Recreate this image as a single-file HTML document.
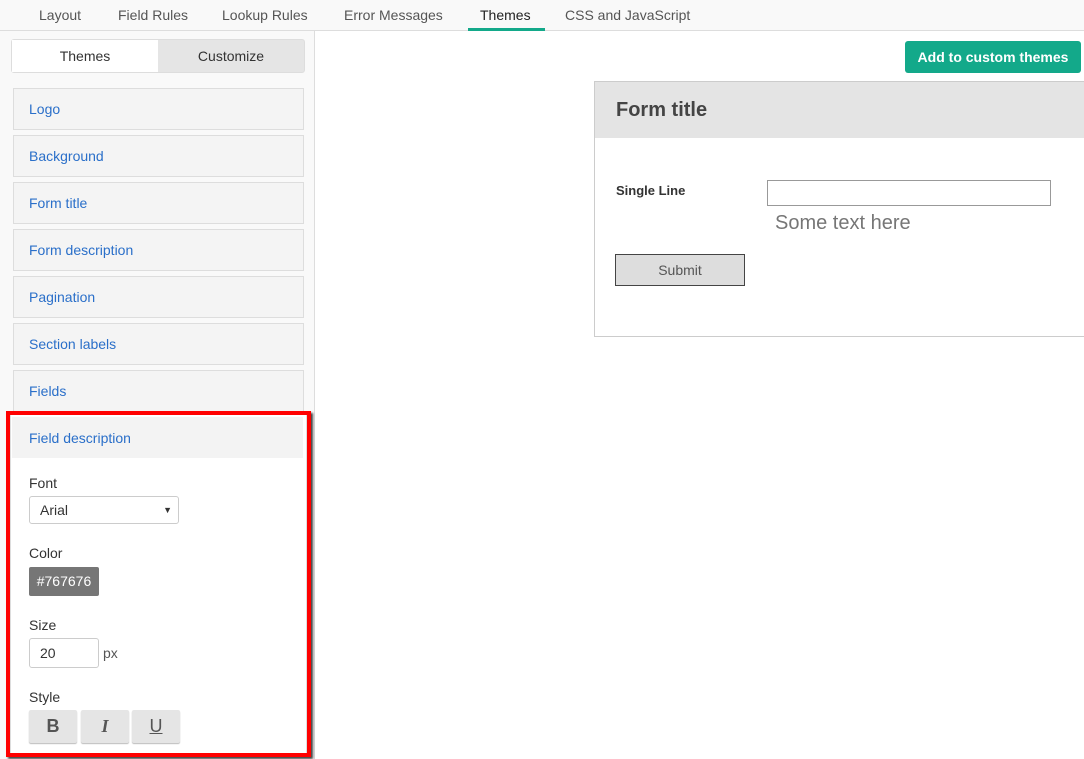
<!DOCTYPE html>
<html><head><style>
*{box-sizing:border-box;margin:0;padding:0}
body{width:1084px;height:759px;overflow:hidden;background:#fff;font-family:"Liberation Sans",sans-serif;position:relative}
.a{position:absolute}
.tab{position:absolute;top:0;height:30px;line-height:30px;font-size:14px;color:#555}
.item{position:absolute;left:13px;width:291px;height:42px;background:#f4f4f4;border:1px solid #ddd;color:#2a6fc9;font-size:14px;line-height:40px;padding-left:15px}
.lbl{position:absolute;left:29px;font-size:14px;color:#333}
.sb{position:absolute;top:710px;width:48px;height:33px;background:#e5e5e5;border-radius:2px;box-shadow:0 1px 1px #bbb;text-align:center;line-height:33px;font-size:18px;font-weight:bold;color:#555}
</style></head><body>
<div class="a" style="left:0;top:0;width:1084px;height:31px;background:#f9f9f9;border-bottom:1px solid #ddd"></div>
<div class="tab" style="left:39px">Layout</div>
<div class="tab" style="left:118px">Field Rules</div>
<div class="tab" style="left:222px">Lookup Rules</div>
<div class="tab" style="left:344px">Error Messages</div>
<div class="tab" style="left:480px;color:#222">Themes</div>
<div class="a" style="left:468px;top:28px;width:77px;height:3px;background:#13a98a"></div>
<div class="tab" style="left:565px">CSS and JavaScript</div>
<div class="a" style="left:0;top:31px;width:315px;height:728px;background:#f9f9f9;border-right:1px solid #ddd"></div>
<div class="a" style="left:11px;top:39px;width:294px;height:34px;border:1px solid #ddd;border-radius:3px;background:#e5e5e5"></div>
<div class="a" style="left:12px;top:40px;width:146px;height:32px;background:#fff;text-align:center;line-height:32px;font-size:14px;color:#333">Themes</div>
<div class="a" style="left:158px;top:40px;width:146px;height:32px;text-align:center;line-height:32px;font-size:14px;color:#333">Customize</div>
<div class="item" style="top:88px">Logo</div>
<div class="item" style="top:135px">Background</div>
<div class="item" style="top:182px">Form title</div>
<div class="item" style="top:229px">Form description</div>
<div class="item" style="top:276px">Pagination</div>
<div class="item" style="top:323px">Section labels</div>
<div class="item" style="top:370px">Fields</div>
<div class="a" style="left:6px;top:411px;width:305px;height:346px;border:4px solid #f00;background:#fff;box-shadow:2px 2px 2px #444"></div>
<div class="a" style="left:10px;top:415px;width:297px;height:338px;border-left:1px solid #ddd;border-right:1px solid #ddd"></div>
<div class="a" style="left:12px;top:417px;width:291px;height:41px;background:#f3f3f3;color:#2a6fc9;font-size:14px;line-height:42px;padding-left:17px">Field description</div>
<div class="lbl" style="top:475px">Font</div>
<div class="a" style="left:29px;top:496px;width:150px;height:28px;border:1px solid #ccc;border-radius:3px;background:#fff;font-size:14px;line-height:26px;padding-left:10px;color:#333">Arial<span style="position:absolute;right:6px;font-size:9px">▼</span></div>
<div class="lbl" style="top:545px">Color</div>
<div class="a" style="left:29px;top:567px;width:70px;height:29px;background:#767676;border-radius:2px;color:#fff;font-size:14px;line-height:29px;text-align:center">#767676</div>
<div class="lbl" style="top:617px">Size</div>
<div class="a" style="left:29px;top:638px;width:70px;height:30px;border:1px solid #ccc;border-radius:3px;font-size:14px;line-height:28px;padding-left:10px;color:#333">20</div>
<div class="a" style="left:103px;top:645px;font-size:14px;color:#555">px</div>
<div class="lbl" style="top:689px">Style</div>
<div class="sb" style="left:29px">B</div>
<div class="sb" style="left:81px;font-style:italic;font-family:'Liberation Serif',serif">I</div>
<div class="sb" style="left:132px;text-decoration:underline;font-weight:normal">U</div>
<div class="a" style="left:905px;top:41px;width:176px;height:32px;background:#13a98a;border-radius:3px;color:#fff;font-size:14px;font-weight:bold;line-height:32px;text-align:center">Add to custom themes</div>
<div class="a" style="left:594px;top:81px;width:500px;height:256px;border:1px solid #ccc;background:#fff"></div>
<div class="a" style="left:595px;top:82px;width:489px;height:56px;background:#e4e4e4;font-size:20px;font-weight:bold;color:#444;line-height:56px;padding-left:21px">Form title</div>
<div class="a" style="left:616px;top:183px;font-size:13px;font-weight:bold;color:#333">Single Line</div>
<div class="a" style="left:767px;top:180px;width:284px;height:26px;border:1px solid #999"></div>
<div class="a" style="left:775px;top:212px;font-size:20px;color:#767676">Some text here</div>
<div class="a" style="left:615px;top:254px;width:130px;height:32px;border:1px solid #444;background:#ddd;text-align:center;line-height:30px;font-size:14px;color:#555">Submit</div>
</body></html>
